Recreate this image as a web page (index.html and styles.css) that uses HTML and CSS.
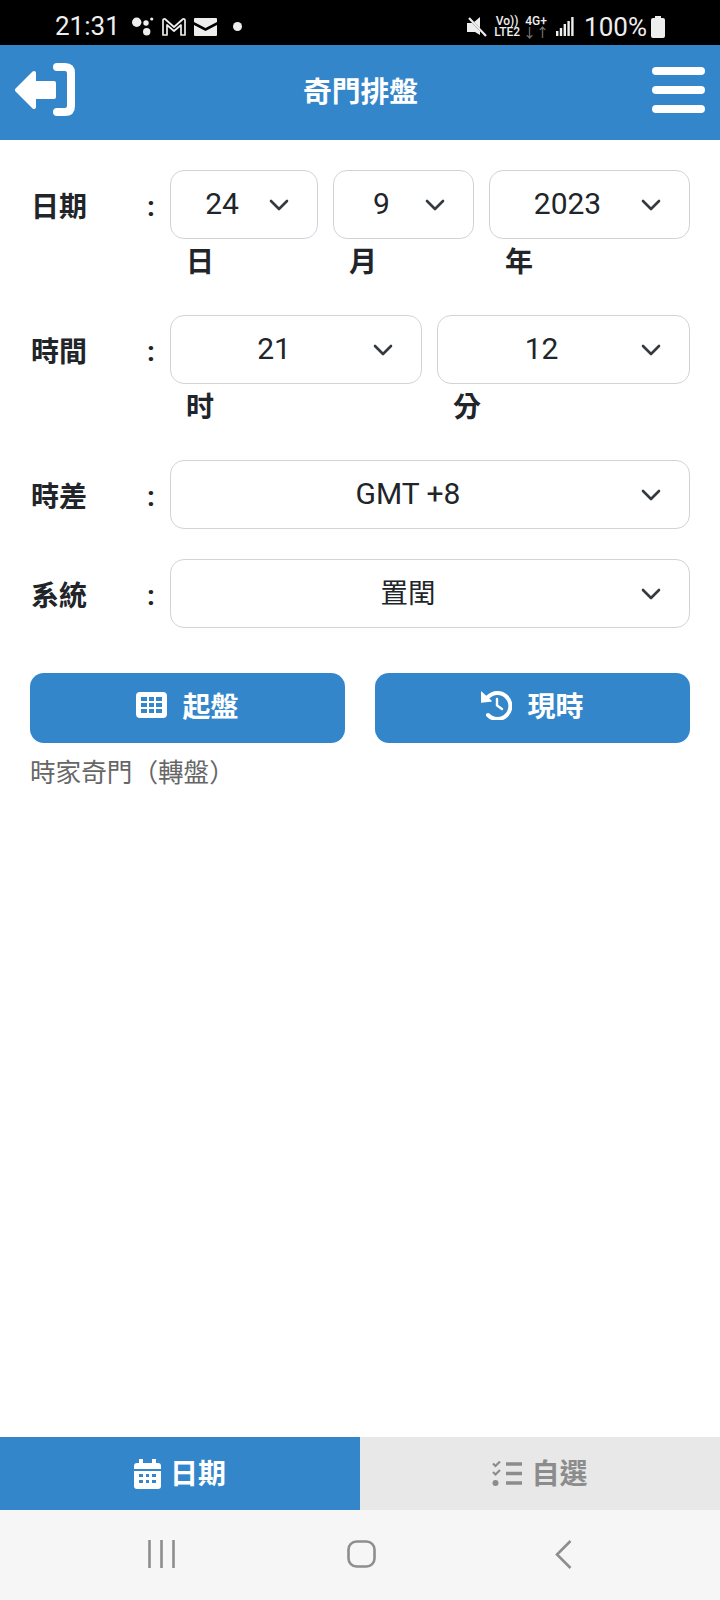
FILE: index.html
```html
<!DOCTYPE html>
<html lang="zh-Hant">
<head>
    <meta charset="UTF-8">
    <meta name="viewport" content="width=device-width, initial-scale=1.0">
    <title>奇門排盤</title>
    <link rel="stylesheet" href="styles.css">
</head>
<body>
    <svg class="defs" width="0" height="0">
        <symbol id="chevron" viewBox="0 0 20 12">
            <path d="M2 2 L10 10 L18 2" fill="none" stroke="#343a40" stroke-width="2.6" stroke-linecap="round" stroke-linejoin="round"/>
        </symbol>
    </svg>

    <div class="app">
        <!-- status bar -->
        <div class="status-bar">
            <div class="status-left">
                <span class="clock">21:31</span>
                <svg class="st-dots" width="22" height="19" viewBox="0 0 22 19"><circle cx="4.7" cy="5.3" r="4.7" fill="#eee"/><circle cx="14.7" cy="14.8" r="3.7" fill="#eee"/><circle cx="14" cy="6" r="2.7" fill="#eee"/><circle cx="19.7" cy="2" r="1.6" fill="#eee"/></svg>
                <svg class="st-gmail" width="24" height="18" viewBox="0 0 24 18"><path d="M1 17 V2.5 Q1 0.5 3 1 L12 9 L21 1 Q23 0.5 23 2.5 V17 H19 V7 L12 13 L5 7 V17 Z" fill="none" stroke="#eee" stroke-width="1.7" stroke-linejoin="round"/></svg>
                <svg class="st-mail" width="23" height="18" viewBox="0 0 23 18"><path d="M1 0 H22 Q23 0 23 1 V4 L11.5 10 L0 4 V1 Q0 0 1 0 Z M0 7 L11.5 13 L23 7 V17 Q23 18 22 18 H1 Q0 18 0 17 Z" fill="#eee"/></svg>
                <span class="st-dot"></span>
            </div>
            <div class="status-right">
                <svg class="st-mute" width="21" height="20" viewBox="0 0 21 20"><path d="M1 6 H7 L14 0 V18 L9 15 H1 Z" fill="#eee"/><path d="M1 -1 L19 18" stroke="#000" stroke-width="2"/><path d="M3 1 L20 19" stroke="#eee" stroke-width="2.2"/></svg>
                <div class="st-net st-volte"><span>Vo))</span><span>LTE2</span></div>
                <div class="st-net st-4g"><span>4G+</span><span class="arrows">↓↑</span></div>
                <svg class="st-signal" width="18" height="19" viewBox="0 0 18 19"><path d="M0 14 H2.4 V19 H0 Z M3.8 11 H6.2 V19 H3.8 Z M7.6 7 H10 V19 H7.6 Z M11.4 4 H13.8 V19 H11.4 Z M15.2 0 H17.6 V19 H15.2 Z" fill="#eee"/></svg>
                <span class="battery-text">100%</span>
                <svg class="st-battery" width="14" height="22" viewBox="0 0 14 22"><path d="M4 0 H10 V2 H12 Q14 2 14 4 V20 Q14 22 12 22 H2 Q0 22 0 20 V4 Q0 2 2 2 H4 Z" fill="#eee"/></svg>
            </div>
        </div>

        <header class="top-bar">
            <svg class="back-icon" width="60" height="53" viewBox="0 0 60 53">
                <path d="M2 27 L19 10 V20 H39 V34 H19 V44 Z" fill="#fff" stroke="#fff" stroke-width="4" stroke-linejoin="round"/>
                <path d="M42 4 H50 Q56 4 56 10 V43 Q56 49 50 49 H42" fill="none" stroke="#fff" stroke-width="8" stroke-linecap="round"/>
            </svg>
            <h1 class="title">奇門排盤</h1>
            <div class="menu-icon"><span></span><span></span><span></span></div>
        </header>

        <main class="form">
            <div class="form-row">
                <div class="row-label"><span>日期</span><span class="colon">:</span></div>
                <div class="fields">
                    <div class="field field-day">
                        <div class="select"><span>24</span><svg><use href="#chevron"/></svg></div>
                        <div class="unit">日</div>
                    </div>
                    <div class="field field-month">
                        <div class="select"><span>9</span><svg><use href="#chevron"/></svg></div>
                        <div class="unit">月</div>
                    </div>
                    <div class="field field-year">
                        <div class="select"><span>2023</span><svg><use href="#chevron"/></svg></div>
                        <div class="unit">年</div>
                    </div>
                </div>
            </div>

            <div class="form-row">
                <div class="row-label"><span>時間</span><span class="colon">:</span></div>
                <div class="fields">
                    <div class="field field-hour">
                        <div class="select"><span>21</span><svg><use href="#chevron"/></svg></div>
                        <div class="unit">时</div>
                    </div>
                    <div class="field">
                        <div class="select"><span>12</span><svg><use href="#chevron"/></svg></div>
                        <div class="unit">分</div>
                    </div>
                </div>
            </div>

            <div class="form-row">
                <div class="row-label"><span>時差</span><span class="colon">:</span></div>
                <div class="fields">
                    <div class="field">
                        <div class="select"><span>GMT +8</span><svg><use href="#chevron"/></svg></div>
                    </div>
                </div>
            </div>

            <div class="form-row">
                <div class="row-label"><span>系統</span><span class="colon">:</span></div>
                <div class="fields">
                    <div class="field">
                        <div class="select select-cjk"><span>置閏</span><svg><use href="#chevron"/></svg></div>
                    </div>
                </div>
            </div>

            <div class="button-container">
                <button class="btn">
                    <svg width="31" height="26" viewBox="0 0 31 26"><path fill-rule="evenodd" fill="#fff" d="M4 0 H27 Q31 0 31 4 V22 Q31 26 27 26 H4 Q0 26 0 22 V4 Q0 0 4 0 Z M5 5 V9 H11 V5 Z M13 5 V9 H18 V5 Z M20 5 V9 H26 V5 Z M5 11 V15 H11 V11 Z M13 11 V15 H18 V11 Z M20 11 V15 H26 V11 Z M5 17 V21 H11 V17 Z M13 17 V21 H18 V17 Z M20 17 V21 H26 V17 Z"/></svg>
                    起盤
                </button>
                <button class="btn">
                    <svg width="31" height="30" viewBox="0 0 31 30">
                        <path d="M7 7 A13 13 0 1 1 7 25" fill="none" stroke="#fff" stroke-width="4" stroke-linecap="round"/>
                        <path d="M0 2 L10 11 L0 12 Z" fill="#fff" stroke="#fff" stroke-width="1.5" stroke-linejoin="round"/>
                        <path d="M16 9 V15.5 L21 19" fill="none" stroke="#fff" stroke-width="2.4" stroke-linecap="round"/>
                    </svg>
                    現時
                </button>
            </div>
            <p class="mode-text">時家奇門（轉盤）</p>
        </main>

        <nav class="tabs">
            <div class="tab tab-active">
                <svg width="27" height="30" viewBox="0 0 27 30"><path fill-rule="evenodd" fill="#fff" d="M5 0 H9 V4 H18 V0 H22 V4 H24 Q27 4 27 7 V10 H0 V7 Q0 4 3 4 H5 Z M0 12 H27 V27 Q27 30 24 30 H3 Q0 30 0 27 Z M5 15 V18 H9 V15 Z M12 15 V18 H15 V15 Z M18 15 V18 H22 V15 Z M5 21 V24 H9 V21 Z M12 21 V24 H15 V21 Z M18 21 V24 H22 V21 Z"/></svg>
                <span>日期</span>
            </div>
            <div class="tab">
                <svg width="30" height="25" viewBox="0 0 30 25">
                    <path d="M1 2.5 L3.5 5 L8 0.5 M1 11 L3.5 13.5 L8 9" fill="none" stroke="#8c8c8c" stroke-width="2.2"/>
                    <circle cx="3.5" cy="22" r="3" fill="#8c8c8c"/>
                    <path d="M14 3 H30 M14 12.5 H30 M14 22 H30" stroke="#8c8c8c" stroke-width="3.6"/>
                </svg>
                <span>自選</span>
            </div>
        </nav>

        <div class="nav-bar">
            <svg class="nav-recent" width="27" height="28" viewBox="0 0 27 28"><path d="M1.5 0 V28 M13.5 0 V28 M25.5 0 V28" stroke="#8e8e8e" stroke-width="2.6"/></svg>
            <svg class="nav-home" width="29" height="28" viewBox="0 0 29 28"><rect x="1.5" y="1.5" width="26" height="25" rx="8" fill="none" stroke="#8e8e8e" stroke-width="2.6"/></svg>
            <svg class="nav-back" width="17" height="29" viewBox="0 0 17 29"><path d="M15.5 1 L2 14.5 L15.5 28" fill="none" stroke="#8e8e8e" stroke-width="2.6"/></svg>
        </div>
    </div>
</body>
</html>
```

FILE: styles.css
```css
body {
    margin: 0;
    font-family: Roboto, "Noto Sans CJK TC", sans-serif;
    background-color: #fff;
    color: #212529;
}

.defs {
    display: block;
}

.app {
    width: 720px;
    height: 1600px;
    display: flex;
    flex-direction: column;
    overflow: hidden;
}

/* status bar */
.status-bar {
    height: 45px;
    box-sizing: border-box;
    background-color: #000;
    color: #eee;
    display: flex;
    justify-content: space-between;
    align-items: center;
    padding: 8px 55px 0 55px;
    flex-shrink: 0;
}

.status-left,
.status-right {
    display: flex;
    align-items: center;
}

.clock {
    font-size: 26px;
    line-height: 37px;
    width: 77px;
}

.st-gmail {
    margin-left: 8px;
}

.st-mail {
    margin-left: 8px;
}

.st-dot {
    width: 9px;
    height: 9px;
    border-radius: 50%;
    background-color: #eee;
    margin-left: 16px;
}

.st-net {
    display: flex;
    flex-direction: column;
    align-items: center;
    font-size: 12px;
    line-height: 11px;
    font-weight: 500;
}

.st-volte {
    margin-left: 7px;
    width: 26px;
}

.st-4g {
    margin-left: 5px;
    width: 22px;
}

.arrows {
    font-size: 13px;
    color: #777;
}

.st-signal {
    margin-left: 9px;
}

.battery-text {
    font-size: 26px;
    margin-left: 10px;
}

.st-battery {
    margin-left: 4px;
}

/* top bar */
.top-bar {
    height: 95px;
    box-sizing: border-box;
    background-color: #3486cb;
    display: flex;
    justify-content: space-between;
    align-items: center;
    padding: 0 15px 6px 15px;
    flex-shrink: 0;
}

.title {
    margin: 0 6px 0 0;
    color: #fff;
    font-size: 28.8px;
    font-weight: 700;
}

.menu-icon {
    width: 53px;
    display: flex;
    flex-direction: column;
    gap: 11px;
}

.menu-icon span {
    height: 8px;
    border-radius: 4px;
    background-color: #fff;
}

/* form */
.form {
    flex: 1;
    padding: 30px 30px 0 30px;
}

.form-row {
    display: flex;
    margin-bottom: 30px;
}

.row-label {
    width: 140px;
    height: 69px;
    padding: 0 15px 0 1px;
    box-sizing: border-box;
    display: flex;
    justify-content: space-between;
    align-items: center;
    font-size: 28px;
    font-weight: 700;
    flex-shrink: 0;
}

.colon {
    padding-top: 4px;
}

.fields {
    flex: 1;
    display: flex;
    gap: 15px;
}

.field {
    flex: 1;
    min-width: 0;
}

.field-day {
    flex: none;
    width: 148px;
}

.field-month {
    flex: none;
    width: 141px;
}

.field-hour {
    flex: none;
    width: 252px;
}

.select {
    height: 69px;
    box-sizing: border-box;
    border: 1px solid #ced4da;
    border-radius: 14px;
    display: flex;
    align-items: center;
    font-size: 30px;
    padding-left: 4px;
}

.select span {
    flex: 1;
    text-align: center;
    padding-bottom: 2px;
}

.select-cjk {
    font-size: 27.5px;
}

.select-cjk span {
    padding-bottom: 6px;
}

.select svg {
    width: 20px;
    height: 12px;
    margin-right: 28px;
    flex-shrink: 0;
}

.unit {
    height: 46px;
    line-height: 48px;
    padding-left: 16px;
    font-size: 28px;
    font-weight: 700;
}

.button-container {
    display: flex;
    gap: 30px;
    margin-top: 45px;
}

.btn {
    flex: 1;
    height: 70px;
    box-sizing: border-box;
    padding: 0 0 6px 0;
    border: none;
    border-radius: 14px;
    background-color: #3486cb;
    color: #fff;
    font-family: inherit;
    font-size: 28px;
    font-weight: 700;
    display: flex;
    justify-content: center;
    align-items: center;
    gap: 15px;
}

.mode-text {
    margin: 9px 0 0 0;
    font-size: 25.6px;
    line-height: 42px;
    color: #666;
}

/* tabs */
.tabs {
    height: 73px;
    display: flex;
    flex-shrink: 0;
}

.tab {
    flex: 1;
    display: flex;
    justify-content: center;
    align-items: center;
    gap: 9px;
    font-size: 28px;
    font-weight: 700;
    background-color: #e8e8e8;
    color: #8c8c8c;
}

.tab span {
    padding-bottom: 4px;
}

.tab-active {
    background-color: #3486cb;
    color: #fff;
}

/* android nav */
.nav-bar {
    height: 90px;
    background-color: #f6f6f6;
    display: flex;
    align-items: center;
    padding: 0 0 2px 148px;
    box-sizing: border-box;
    flex-shrink: 0;
}

.nav-home {
    margin-left: 172px;
}

.nav-back {
    margin-left: 179px;
}
```
